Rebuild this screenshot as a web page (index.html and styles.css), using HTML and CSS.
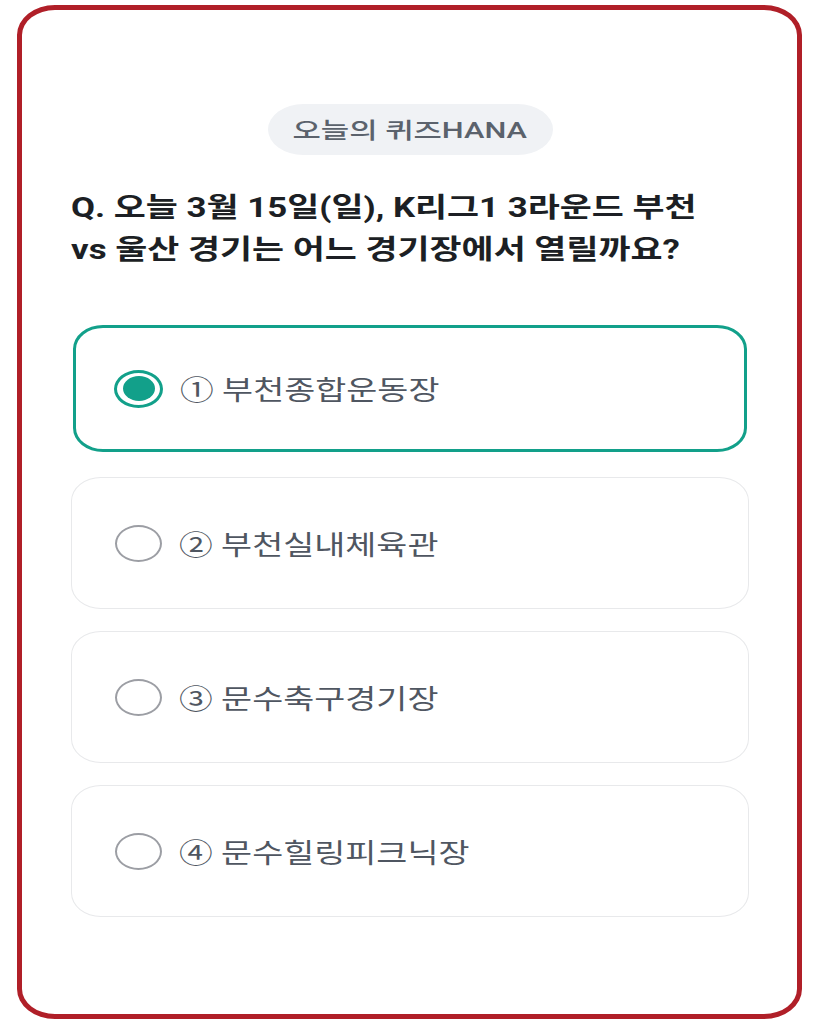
FILE: index.html
```html
<!DOCTYPE html>
<html lang="ko">
<head>
<meta charset="utf-8">
<link rel="stylesheet" href="styles.css">
</head>
<body>
<div class="frame">
  <div class="pill-row"><span class="pill"><span class="pill-text">오늘의 퀴즈HANA</span></span></div>
  <h1 class="question">Q. 오늘 3월 15일(일), K리그1 3라운드 부천<br>vs 울산 경기는 어느 경기장에서 열릴까요?</h1>
  <div class="options">
    <div class="option selected"><span class="radio"><span class="dot"></span></span><span class="label">① 부천종합운동장</span></div>
    <div class="option"><span class="radio"></span><span class="label">② 부천실내체육관</span></div>
    <div class="option"><span class="radio"></span><span class="label">③ 문수축구경기장</span></div>
    <div class="option"><span class="radio"></span><span class="label">④ 문수힐링피크닉장</span></div>
  </div>
</div>
</body>
</html>
```
FILE: styles.css
```css
* { box-sizing: border-box; }
html, body { margin: 0; padding: 0; background: #ffffff; overflow: hidden; }
body {
  width: 819px; height: 1024px;
  font-family: Roboto, "Noto Sans CJK KR", "Noto Sans", sans-serif;
  padding: 5px 17px 5px 17px;
}
.frame {
  width: 785px; height: 1014px;
  border: 5px solid #b01f28;
  border-radius: 38px / 30px;
  background: #fff;
  padding: 94px 48px 0 49px;
  overflow: hidden;
}
.pill-row { display: flex; justify-content: center; }
.pill {
  display: inline-flex; align-items: center; justify-content: center;
  height: 51px; width: 285px;
  background: #f0f2f5;
  border-radius: 36px / 26px;
  color: #5b626c;
  padding-bottom: 4px;
}
.pill-text {
  display: inline-block;
  font-size: 22px; font-weight: 500;
  white-space: nowrap;
  transform: scaleX(1.4);
}
.question {
  width: fit-content;
  margin: 32px 0 0 0;
  font-size: 27px; font-weight: 700;
  line-height: 42px;
  color: #1c1f24;
  white-space: nowrap;
  transform: scaleX(1.29);
  transform-origin: left top;
}
.options {
  margin-top: 54px;
  display: flex; flex-direction: column; gap: 22px;
}
.option {
  height: 132px;
  border: 1.5px solid #e8e9eb;
  border-radius: 30px / 24px;
  display: flex; align-items: center;
  padding-left: 43px;
}
.option.selected {
  height: 127px;
  margin: 0 2px 3px;
  border: 3px solid #12a08a;
  padding-left: 38px;
}
.radio {
  width: 47px; height: 37px;
  border: 2.5px solid #9c9ea4;
  border-radius: 50%;
  display: flex; align-items: center; justify-content: center;
  flex: none;
}
.selected .radio { width: 49px; height: 38px; border: 3px solid #12a08a; }
.dot { width: 32px; height: 25px; border-radius: 50%; background: #12a08a; }
.label {
  display: inline-block;
  margin-left: 17px;
  font-size: 27px; font-weight: 400;
  color: #4f5661;
  white-space: nowrap;
  transform: scaleX(1.25);
  transform-origin: left center;
}
```
